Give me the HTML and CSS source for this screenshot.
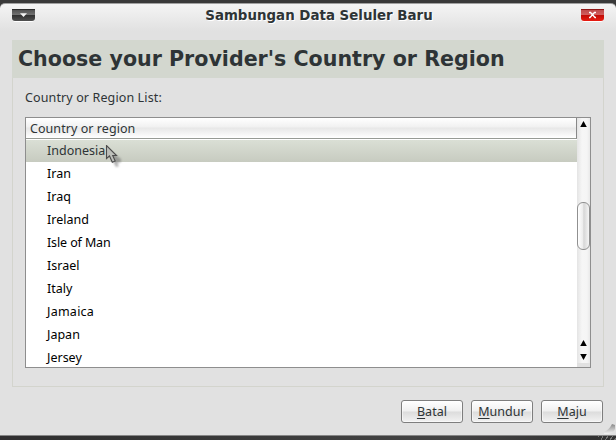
FILE: index.html
```html
<!DOCTYPE html>
<html lang="id">
<head>
<meta charset="utf-8">
<title>Sambungan Data Seluler Baru</title>
<link rel="stylesheet" href="styles.css">
</head>
<body>
<main class="window">
  <header class="titlebar">
    <svg class="control" width="23" height="13" viewBox="0 0 23 13">
      <defs><linearGradient id="dark" x2="0" y2="1"><stop stop-color="#4c4c4c"/><stop offset=".5" stop-color="#737373"/><stop offset=".51" stop-color="#303030"/><stop offset="1" stop-color="#505050"/></linearGradient></defs>
      <path d="M0 1H23V9Q23 13 19 13H4Q0 13 0 9Z" fill="#fff"/>
      <path d="M0 0H23V9Q23 12 20 12H3Q0 12 0 9Z" fill="url(#dark)"/>
      <path d="M0 .5H23" stroke="#2b2b2b"/>
      <path d="M8 4.2H15L11.5 8Z" fill="#f4f4f4"/>
    </svg>
    <h1 class="title">Sambungan Data Seluler Baru</h1>
    <svg class="control" width="23" height="13" viewBox="0 0 23 13">
      <defs><linearGradient id="red" x2="0" y2="1"><stop stop-color="#b94545"/><stop offset=".5" stop-color="#d46060"/><stop offset=".51" stop-color="#c00c06"/><stop offset="1" stop-color="#e81c12"/></linearGradient></defs>
      <path d="M0 1H23V9Q23 13 19 13H4Q0 13 0 9Z" fill="#fff"/>
      <path d="M0 0H23V9Q23 12 20 12H3Q0 12 0 9Z" fill="url(#red)"/>
      <path d="M0 .5H23" stroke="#8f1717"/>
      <path d="M8 3.5H9.5L14 8.5H15M15 3.5H13.5L9 8.5H8" fill="none" stroke="#fff" stroke-width="1.3"/>
    </svg>
  </header>
  <section class="page">
    <h2 class="heading">Choose your Provider's Country or Region</h2>
    <p class="label"><span>Country or Region List:</span></p>
    <div class="list">
      <div class="table">
        <div class="column"><span>Country or region</span></div>
        <ul class="rows">
          <li class="selected"><span>Indonesia</span>
            <svg class="pointer" width="20" height="24" viewBox="0 0 20 24">
              <path class="shadow" d="M5 6L16 14L16 17L12 18L14 21L11 22L8 16Z" fill="#777" opacity=".6"/>
              <path d="M1.5 .5V13.5L4.5 11L7.3 17.3L10.2 16L7.7 10.5H11.5Z" fill="#bdbfba" stroke="#4c4c4c" stroke-width="1.1"/>
            </svg>
          </li>
          <li>Iran</li><li>Iraq</li><li>Ireland</li><li class="tight">Isle of Man</li><li>Israel</li><li>Italy</li><li class="wide">Jamaica</li><li>Japan</li><li>Jersey</li>
        </ul>
      </div>
      <div class="scrollbar">
        <svg class="arrow" width="7" height="7" viewBox="0 0 7 7"><path d="M3.5 0L6.8 6H.2Z"/></svg>
        <div class="thumb"></div>
        <svg class="arrow" width="7" height="7" viewBox="0 0 7 7"><path d="M3.5 0L6.8 6H.2Z"/></svg>
        <svg class="arrow down" width="7" height="7" viewBox="0 0 7 7"><path d="M3.5 6L6.8 0H.2Z"/></svg>
      </div>
    </div>
  </section>
  <footer class="actions">
    <button><span><u>B</u>atal</span></button>
    <button><span><u>M</u>undur</span></button>
    <button><span><u>M</u>aju</span></button>
  </footer>
  <svg class="grip" width="12" height="12" viewBox="0 0 12 12">
    <defs><linearGradient id="metal" x2="0" y2="1"><stop stop-color="#888"/><stop offset="1" stop-color="#f4f4f4"/></linearGradient></defs>
    <path d="M0 9Q5 7 8 1L11 2V6Q10 10 4 11H0Z" fill="url(#metal)"/>
  </svg>
</main>
<div class="desktop"></div>
</body>
</html>
```
FILE: styles.css
```css
* { box-sizing: border-box; margin: 0; padding: 0; }
body { width: 616px; height: 440px; overflow: hidden; padding-top: 3px; background: #393939; color: #2e3436; font: 12.5px/23px "Noto Sans", sans-serif; }
.window { position: relative; height: 433px; border-top: 1px solid #a0a0a0; border-bottom: 1px solid #858585; border-radius: 5px 5px 0 0; background: linear-gradient(#f4f4f4, #e1e1e1 27px); }
.titlebar { height: 36px; padding: 5px 12px 0; display: flex; justify-content: space-between; align-items: flex-start; }
.control { display: block; flex: none; }
.title { padding-left: 22px; flex: 1; text-align: center; font: bold 13.4px/14px "DejaVu Sans", sans-serif; text-shadow: 1px 1px #fff; white-space: nowrap; }
.page { width: 592px; height: 347px; margin-left: 12px; border: 1px solid #d3d4cd; border-top: 0; }
.heading { height: 38px; margin: 0 -1px; padding-left: 6px; background: #d3d7cf; font: bold 20.6px/39px "DejaVu Sans", sans-serif; white-space: nowrap; }
.label { height: 39px; padding: 8px 12px 0; letter-spacing: .12px; }
.list { width: 566px; height: 251px; margin-left: 12px; border: 1px solid #8e8e8e; background: #fff; display: flex; }
.table { width: 551px; overflow: hidden; }
.column { height: 21px; padding-left: 4px; line-height: 22px; letter-spacing: .06px; border-bottom: 1px solid #979b95; border-right: 1px solid #888; background: linear-gradient(#fff, #f1f1f1 45%, #e7e7e7 50%, #fff); }
.rows { list-style: none; color: #000; }
.rows li { height: 23px; padding-left: 21px; }
.rows .tight { letter-spacing: -.12px; }
.rows .wide { letter-spacing: .25px; }
.rows .selected { position: relative; color: #2e3436; background: linear-gradient(#fff 1px, #dadfd5 1px, #c7cbc0); }
.pointer { position: absolute; left: 79px; top: 6px; }
.shadow { filter: blur(.8px); }
.scrollbar { width: 13px; background: linear-gradient(90deg, #e4e4e4, #f6f6f6 5px, #f5f5f5 10px, #e9e9e9); display: flex; flex-direction: column; align-items: center; padding-top: 3px; border-bottom: 4px solid #e1e1e1; }
.arrow { flex: none; fill: #000; }
.thumb { flex: none; width: 13px; height: 48px; margin: 74px 0 90px; border: 1px solid #909090; border-radius: 6px; background: linear-gradient(90deg, #fff, #ececec 45%, #d6d6d6 52%, #f5f5f5); }
.down { margin-top: 7px; }
.actions { height: 36px; padding-right: 13px; display: flex; justify-content: flex-end; align-items: flex-end; gap: 8px; }
.actions button { width: 62px; height: 23px; border: 1px solid #7e7e7e; border-radius: 3px; color: #2e3436; font: 12.5px/20px "Noto Sans", sans-serif; letter-spacing: .05px; background: linear-gradient(#fff, #f0f0f0 48%, #dcdcdc 52%, #f2f2f2); box-shadow: inset 0 0 0 1px #fff8; }
.actions u { text-underline-offset: 2px; }
.grip { position: absolute; right: 0; bottom: 0; }
.desktop { height: 4px; background: repeating-linear-gradient(120deg, #777 0 1px, #333 1px 4px) right / 18px 4px no-repeat, linear-gradient(90deg, #302f30, #303030 50px, #444 450px, #302f30); }
```
